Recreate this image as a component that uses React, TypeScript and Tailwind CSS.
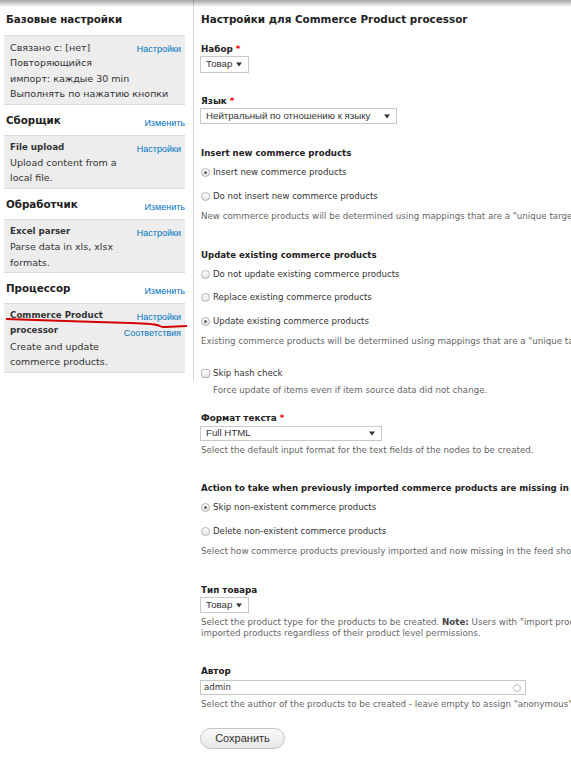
import React from 'react';

const Link = ({ children, className = '' }: { children: React.ReactNode; className?: string }) => (
  <span className={`font-['Liberation_Sans',Arial,sans-serif] text-[9px] text-[#0074bd] ${className}`}>{children}</span>
);

const SideHeader = ({ title }: { title: string }) => (
  <div className="h-[30px] pt-[8px] flex justify-between">
    <h2 className="pl-[2px] text-[10.3px] font-bold leading-[14px] text-[#222]">{title}</h2>
    <Link className="mt-[4px] leading-[12px]">Изменить</Link>
  </div>
);

const SideBox = ({
  title = [],
  lines,
  links,
}: {
  title?: string[];
  lines: string[];
  links: string[];
}) => (
  <div className="bg-[#ededed] border-y border-[#dadada] pt-[4px] pb-[2px] pl-[6px] pr-[4px] text-[9.5px] leading-[15.4px] text-[#333]">
    <div className="float-right mt-[1px] flex flex-col items-end leading-[16px]">
      {links.map((l) => (
        <Link key={l}>{l}</Link>
      ))}
    </div>
    {title.map((t) => (
      <div key={t} className="whitespace-nowrap font-bold text-[8.7px]">
        {t}
      </div>
    ))}
    {lines.map((l) => (
      <div key={l} className="whitespace-nowrap">
        {l}
      </div>
    ))}
  </div>
);

const Label = ({ children, required = false }: { children: React.ReactNode; required?: boolean }) => (
  <div className="pl-[1px] text-[8.8px] font-bold leading-[12px] text-[#222] whitespace-nowrap">
    {children}
    {required && <span className="ml-[3px] text-[#e00]">*</span>}
  </div>
);

const Arrow = () => (
  <svg width="6" height="5" viewBox="0 0 6 5" className="shrink-0">
    <path d="M0 0.5h6L3 4.5z" fill="#333" />
  </svg>
);

const Select = ({ value, w, h, className = '' }: { value: string; w: string; h: string; className?: string }) => (
  <div
    className={`flex items-center justify-between border border-[#c8c8c8] bg-white pl-[5px] pr-[6px] font-['Liberation_Sans',Arial,sans-serif] text-[9.7px] text-[#333] ${w} ${h} ${className}`}
  >
    <span className="whitespace-nowrap">{value}</span>
    <Arrow />
  </div>
);

const Radio = ({ label, checked = false, className = '' }: { label: string; checked?: boolean; className?: string }) => (
  <div className={`flex items-center h-[14px] pl-[1px] ${className}`}>
    <span className="flex h-[9px] w-[9px] items-center justify-center rounded-full border border-[#b4b4b4] bg-gradient-to-b from-white to-[#e2e2e2]">
      {checked && <span className="h-[3px] w-[3px] rounded-full bg-[#666]" />}
    </span>
    <span className="ml-[3px] text-[8.6px] text-[#333] whitespace-nowrap">{label}</span>
  </div>
);

const Desc = ({ children, className = '' }: { children: React.ReactNode; className?: string }) => (
  <div className={`pl-[1px] text-[8.7px] leading-[12px] text-[#666] whitespace-nowrap ${className}`}>{children}</div>
);

const FieldsetTitle = ({ children, className = '' }: { children: React.ReactNode; className?: string }) => (
  <div className={`pl-[1px] text-[8.6px] font-bold leading-[12px] text-[#222] whitespace-nowrap ${className}`}>{children}</div>
);

export default function App() {
  return (
    <div className="relative w-[571px] h-[757px] overflow-hidden bg-white font-['DejaVu_Sans',sans-serif]">
      <div className="flex items-start">
        {/* sidebar */}
        <div className="relative w-[194px] shrink-0 border-r border-[#d4d4d4] pl-[4px] pr-[8px] pb-[8px]">
          <div className="h-[35px] pt-[12px]">
            <h2 className="pl-[2px] text-[10.3px] font-bold leading-[14px] text-[#222]">Базовые настройки</h2>
          </div>
          <SideBox
            lines={['Связано с: [нет]', 'Повторяющийся', 'импорт: каждые 30 min', 'Выполнять по нажатию кнопки']}
            links={['Настройки']}
          />
          <SideHeader title="Сборщик" />
          <SideBox title={['File upload']} lines={['Upload content from a', 'local file.']} links={['Настройки']} />
          <SideHeader title="Обработчик" />
          <SideBox title={['Excel parser']} lines={['Parse data in xls, xlsx', 'formats.']} links={['Настройки']} />
          <SideHeader title="Процессор" />
          <SideBox
            title={['Commerce Product', 'processor']}
            lines={['Create and update', 'commerce products.']}
            links={['Настройки', 'Соответствия']}
          />
          {/* red underline drawn over the sidebar */}
          <svg className="absolute left-0 top-0 pointer-events-none" width="194" height="380">
            <path
              d="M6 319 C 40 320, 90 322, 130 323 S 155 327, 165 327 L 187 326"
              stroke="#d40000"
              strokeWidth="1.8"
              fill="none"
            />
          </svg>
        </div>

        {/* main */}
        <div className="flex-1 min-w-0 pl-[6px] pt-[12px]">
          <h1 className="pl-[1px] text-[10.4px] font-bold leading-[14px] text-[#222] whitespace-nowrap">
            Настройки для Commerce Product processor
          </h1>

          <div className="mt-[17px]">
            <Label required>Набор</Label>
          </div>
          <Select value="Товар" w="w-[49px]" h="h-[17px]" className="mt-[1px]" />

          <div className="mt-[22px]">
            <Label required>Язык</Label>
          </div>
          <Select value="Нейтральный по отношению к языку" w="w-[197px]" h="h-[16px]" className="mt-[1px]" />

          <FieldsetTitle className="mt-[23px]">Insert new commerce products</FieldsetTitle>
          <Radio label="Insert new commerce products" checked className="mt-[6px]" />
          <Radio label="Do not insert new commerce products" className="mt-[10px]" />
          <Desc className="mt-[7px]">
            New commerce products will be determined using mappings that are a "unique target".
          </Desc>

          <FieldsetTitle className="mt-[27px]">Update existing commerce products</FieldsetTitle>
          <Radio label="Do not update existing commerce products" className="mt-[6px]" />
          <Radio label="Replace existing commerce products" className="mt-[9px]" />
          <Radio label="Update existing commerce products" checked className="mt-[10px]" />
          <Desc className="mt-[7px]">
            Existing commerce products will be determined using mappings that are a "unique target".
          </Desc>

          <div className="mt-[19px] flex items-center h-[14px] pl-[1px]">
            <span className="h-[9px] w-[9px] rounded-[2px] border border-[#b4b4b4] bg-gradient-to-b from-white to-[#e2e2e2]" />
            <span className="ml-[3px] text-[8.6px] text-[#333] whitespace-nowrap">Skip hash check</span>
          </div>
          <Desc className="mt-[4px] pl-[13px]">Force update of items even if item source data did not change.</Desc>

          <div className="mt-[16px]">
            <Label required>Формат текста</Label>
          </div>
          <Select value="Full HTML" w="w-[182px]" h="h-[15px]" className="mt-[2px]" />
          <Desc className="mt-[3px]">Select the default input format for the text fields of the nodes to be created.</Desc>

          <FieldsetTitle className="mt-[26px]">
            Action to take when previously imported commerce products are missing in the feed
          </FieldsetTitle>
          <Radio label="Skip non-existent commerce products" checked className="mt-[6px]" />
          <Radio label="Delete non-existent commerce products" className="mt-[10px]" />
          <Desc className="mt-[7px]">
            Select how commerce products previously imported and now missing in the feed should be updated.
          </Desc>

          <div className="mt-[27px]">
            <Label>Тип товара</Label>
          </div>
          <Select value="Товар" w="w-[49px]" h="h-[16px]" className="mt-[1px]" />
          <div className="mt-[4px] pl-[1px] text-[8.7px] leading-[11px] text-[#666] whitespace-nowrap">
            <div>
              Select the product type for the products to be created. <strong className="text-[#444]">Note:</strong> Users
              with "import products" permission will be able to edit
            </div>
            <div>imported products regardless of their product level permissions.</div>
          </div>

          <div className="mt-[26px]">
            <Label>Автор</Label>
          </div>
          <div className="mt-[3px] flex h-[15px] w-[326px] items-center justify-between border border-[#c8c8c8] bg-white pl-[3px] pr-[4px]">
            <span className="text-[8.6px] text-[#333]">admin</span>
            <span className="h-[8px] w-[8px] rounded-full border border-[#bbb]" />
          </div>
          <Desc className="mt-[3px]">
            Select the author of the products to be created - leave empty to assign "anonymous".
          </Desc>

          <button className="mt-[18px] h-[21px] w-[85px] rounded-full border border-[#c4c4c4] bg-gradient-to-b from-[#fafafa] to-[#e6e6e6] font-['Liberation_Sans',Arial,sans-serif] text-[11px] text-[#333]">
            Сохранить
          </button>
        </div>
      </div>
      <div className="pointer-events-none absolute inset-x-0 top-0 h-[7px] bg-gradient-to-b from-black/35 to-transparent" />
    </div>
  );
}
